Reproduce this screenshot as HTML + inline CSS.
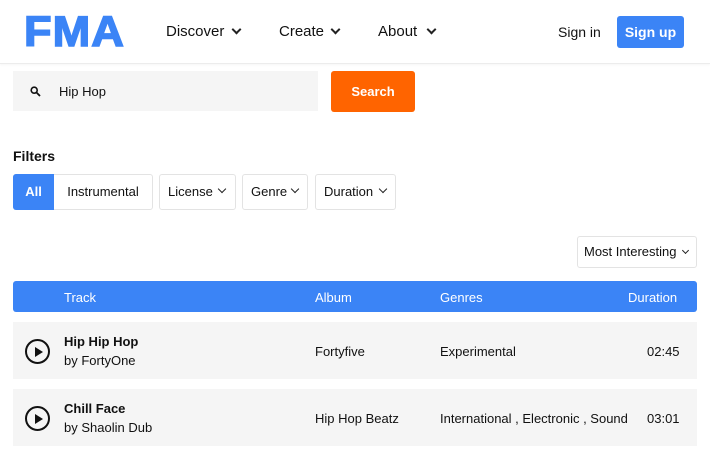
<!DOCTYPE html>
<html><head><meta charset="utf-8"><style>
*{box-sizing:border-box;margin:0;padding:0}
body{width:710px;height:450px;overflow:hidden;background:#fff;font-family:"Liberation Sans",Arial,sans-serif;color:#111;position:relative}
.a{position:absolute;white-space:nowrap}
.hdr{position:absolute;left:0;top:0;width:710px;height:64px;border-bottom:1px solid #ececec;box-shadow:0 1px 2px rgba(0,0,0,.04)}
.nav{font-size:15px;top:23px}
.chev{display:inline-block;width:7px;height:7px;border-right:2px solid #222;border-bottom:2px solid #222;transform:rotate(45deg);position:absolute}
.btn{position:absolute;border:1px solid #e3e3e3;border-radius:3px;height:36px;top:174px;font-size:14px;line-height:34px;text-align:center;background:#fff}
.th{position:absolute;top:281px;left:13px;width:684px;height:31px;background:#3b84f6;border-radius:3px;color:#fff;font-size:13px}
.row{position:absolute;left:13px;width:684px;height:57px;background:#f5f5f5;font-size:13px}
.play{position:absolute;left:12px;top:17px;width:25px;height:25px;border:2px solid #111;border-radius:50%}
.play:after{content:"";position:absolute;left:8px;top:6px;border-left:8px solid #111;border-top:5px solid transparent;border-bottom:5px solid transparent}
</style></head><body>
<div class="hdr"></div>
<div class="a" style="left:24px;top:11px;font-size:43px;font-weight:bold;color:#3b84f6;letter-spacing:1px;transform:scaleX(1.05);transform-origin:left;line-height:42px;-webkit-text-stroke:1.5px #3b84f6">FMA</div>
<div class="a nav" style="left:166px">Discover</div><span class="chev" style="left:233px;top:26px"></span>
<div class="a nav" style="left:279px">Create</div><span class="chev" style="left:332px;top:26px"></span>
<div class="a nav" style="left:378px">About</div><span class="chev" style="left:428px;top:26px"></span>
<div class="a" style="left:558px;top:24px;font-size:14px">Sign in</div>
<div class="a" style="left:617px;top:16px;width:67px;height:32px;background:#3b84f6;border-radius:3px;color:#fff;font-size:14px;font-weight:bold;line-height:32px;text-align:center">Sign up</div>
<div class="a" style="left:13px;top:71px;width:305px;height:40px;background:#f5f5f5"></div>
<svg class="a" style="left:30px;top:86px" width="11" height="11" viewBox="0 0 11 11"><circle cx="4.2" cy="4.2" r="3" fill="none" stroke="#111" stroke-width="1.6"/><path d="M6.5 6.5L10 10" stroke="#111" stroke-width="1.8"/></svg>
<div class="a" style="left:59px;top:84px;font-size:13px">Hip Hop</div>
<div class="a" style="left:331px;top:71px;width:84px;height:41px;background:#ff6400;border-radius:3px;color:#fff;font-size:13px;font-weight:bold;line-height:41px;text-align:center">Search</div>
<div class="a" style="left:13px;top:148px;font-size:14px;font-weight:bold">Filters</div>
<div class="btn" style="left:13px;width:140px"></div>
<div class="a" style="left:13px;top:174px;width:41px;height:36px;background:#3b84f6;color:#fff;font-size:13px;font-weight:bold;line-height:36px;text-align:center;border-radius:3px 0 0 3px">All</div>
<div class="a" style="left:54px;top:174px;width:98px;font-size:13px;line-height:36px;text-align:center">Instrumental</div>
<div class="btn" style="left:159px;width:77px;font-size:13px;text-align:left;padding-left:8px">License</div><span class="chev" style="left:219px;top:186px;width:6px;height:6px;border-width:1.6px"></span>
<div class="btn" style="left:242px;width:66px;font-size:13px;text-align:left;padding-left:8px">Genre</div><span class="chev" style="left:292px;top:186px;width:6px;height:6px;border-width:1.6px"></span>
<div class="btn" style="left:315px;width:81px;font-size:13px;text-align:left;padding-left:8px">Duration</div><span class="chev" style="left:380px;top:186px;width:6px;height:6px;border-width:1.6px"></span>
<div class="btn" style="left:577px;top:236px;width:120px;height:32px;line-height:30px;font-size:13px;text-align:left;padding-left:6px">Most Interesting</div><span class="chev" style="left:683px;top:248px;width:5px;height:5px;border-width:1.4px"></span>
<div class="th"><span class="a" style="left:51px;top:9px">Track</span><span class="a" style="left:302px;top:9px">Album</span><span class="a" style="left:427px;top:9px">Genres</span><span class="a" style="left:615px;top:9px">Duration</span></div>
<div class="row" style="top:322px"><div class="play"></div><span class="a" style="left:51px;top:12px;font-weight:bold">Hip Hip Hop</span><span class="a" style="left:51px;top:31px">by FortyOne</span><span class="a" style="left:302px;top:22px">Fortyfive</span><span class="a" style="left:427px;top:22px">Experimental</span><span class="a" style="left:634px;top:22px">02:45</span></div>
<div class="row" style="top:389px"><div class="play"></div><span class="a" style="left:51px;top:12px;font-weight:bold">Chill Face</span><span class="a" style="left:51px;top:31px">by Shaolin Dub</span><span class="a" style="left:302px;top:22px">Hip Hop Beatz</span><span class="a" style="left:427px;top:22px;width:188px;overflow:hidden">International , Electronic , Soundtrack</span><span class="a" style="left:634px;top:22px">03:01</span></div>
</body></html>
